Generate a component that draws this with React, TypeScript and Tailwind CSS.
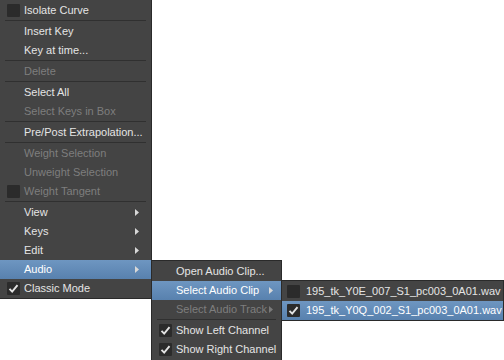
import React from 'react';

type Item =
  | { sep: true }
  | { sep?: false; label: string; disabled?: boolean; check?: 'on' | 'off'; arrow?: boolean; active?: boolean };

const MAIN: Item[] = [
  { label: 'Isolate Curve', check: 'off' },
  { sep: true },
  { label: 'Insert Key' },
  { label: 'Key at time...' },
  { sep: true },
  { label: 'Delete', disabled: true },
  { sep: true },
  { label: 'Select All' },
  { label: 'Select Keys in Box', disabled: true },
  { sep: true },
  { label: 'Pre/Post Extrapolation...' },
  { sep: true },
  { label: 'Weight Selection', disabled: true },
  { label: 'Unweight Selection', disabled: true },
  { label: 'Weight Tangent', disabled: true, check: 'off' },
  { sep: true },
  { label: 'View', arrow: true },
  { label: 'Keys', arrow: true },
  { label: 'Edit', arrow: true },
  { label: 'Audio', arrow: true, active: true },
  { label: 'Classic Mode', check: 'on' },
];

const AUDIO: Item[] = [
  { label: 'Open Audio Clip...' },
  { label: 'Select Audio Clip', arrow: true, active: true },
  { label: 'Select Audio Track', arrow: true, disabled: true },
  { sep: true },
  { label: 'Show Left Channel', check: 'on' },
  { label: 'Show Right Channel', check: 'on' },
];

const CLIPS: Item[] = [
  { label: '195_tk_Y0E_007_S1_pc003_0A01.wav', check: 'off' },
  { label: '195_tk_Y0Q_002_S1_pc003_0A01.wav', check: 'on', active: true },
];

function Box({ on }: { on: boolean }) {
  return (
    <span className="w-[13px] h-[13px] bg-[#2b2b2b] rounded-[1px] flex items-center justify-center">
      {on && (
        <svg width="13" height="13" viewBox="0 0 13 13">
          <path d="M2.5 6.8 L5.2 9.6 L10.5 3.2" fill="none" stroke="#e4e4e4" strokeWidth="1.9" />
        </svg>
      )}
    </span>
  );
}

function Arrow({ dim, right }: { dim?: boolean; right: string }) {
  return (
    <svg width="4" height="7" viewBox="0 0 4 7" className={`absolute top-[6px] ${right}`}>
      <path d="M0 0 L4 3.5 L0 7 Z" fill={dim ? '#7a7a7a' : '#d8d8d8'} />
    </svg>
  );
}

function Menu({ items, boxLeft = 'pl-[7px]', arrowRight = 'right-[12px]' }: { items: Item[]; boxLeft?: string; arrowRight?: string }) {
  return (
    <div className="pt-[1px]">
      {items.map((it, i) =>
        it.sep ? (
          <div key={i} className="h-[2px] mx-[5px] border-t border-[#303030]" />
        ) : (
          <div
            key={i}
            className={`relative h-[19px] flex items-center ${
              it.active ? 'bg-linear-to-b from-[#6e96c1] to-[#5881ae] text-white' : it.disabled ? 'text-[#7e7e7e]' : 'text-[#e4e4e4]'
            }`}
          >
            <span className={`w-[24px] shrink-0 ${boxLeft}`}>{it.check && <Box on={it.check === 'on'} />}</span>
            <span className="whitespace-nowrap">{it.label}</span>
            {it.arrow && <Arrow dim={it.disabled} right={arrowRight} />}
          </div>
        )
      )}
    </div>
  );
}

export default function App() {
  return (
    <div
      className="relative w-[504px] h-[360px] bg-white overflow-hidden text-[11px] leading-none"
      style={{ fontFamily: '"Liberation Sans", Arial, sans-serif' }}
    >
      <div className="w-[152px] h-[299px] bg-[#444444] border-r border-b border-[#2a2a2a]">
        <Menu items={MAIN} />
      </div>

      <div className="absolute left-[151px] top-[260px] w-[131px] h-[101px] bg-[#444444] border border-[#2a2a2a]">
        <Menu items={AUDIO} arrowRight="right-[8px]" />
      </div>

      <div className="absolute left-[281px] top-[280px] w-[223px] h-[41px] bg-[#444444] border border-[#2a2a2a]">
        <Menu items={CLIPS} boxLeft="pl-[5px]" />
      </div>
    </div>
  );
}
